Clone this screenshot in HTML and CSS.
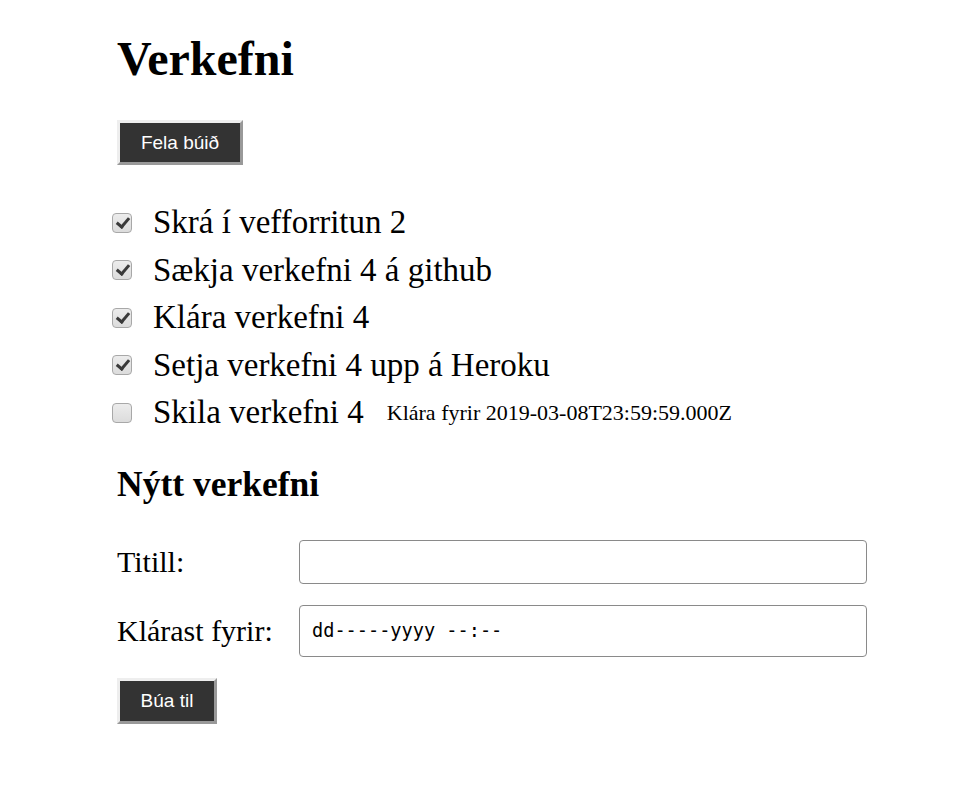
FILE: index.html
```html
<!DOCTYPE html>
<html lang="is">
<head>
<meta charset="utf-8">
<title>Verkefni</title>
<link rel="stylesheet" href="styles.css">
</head>
<body>
<main class="app">
  <h1 class="title">Verkefni</h1>
  <button class="btn btn-hide" type="button">Fela búið</button>
  <ul class="list">
    <li class="item"><input class="check" type="checkbox" checked><span class="item-title">Skrá í vefforritun 2</span></li>
    <li class="item"><input class="check" type="checkbox" checked><span class="item-title">Sækja verkefni 4 á github</span></li>
    <li class="item"><input class="check" type="checkbox" checked><span class="item-title">Klára verkefni 4</span></li>
    <li class="item"><input class="check" type="checkbox" checked><span class="item-title">Setja verkefni 4 upp á Heroku</span></li>
    <li class="item"><input class="check" type="checkbox"><span class="item-title">Skila verkefni 4</span><span class="item-due">Klára fyrir 2019-03-08T23:59:59.000Z</span></li>
  </ul>
  <h2 class="subtitle">Nýtt verkefni</h2>
  <form class="form">
    <div class="field">
      <label class="label" for="title">Titill:</label>
      <input class="input" id="title" type="text">
    </div>
    <div class="field">
      <label class="label" for="due">Klárast fyrir:</label>
      <input class="input input-date" id="due" type="text" value="dd-----yyyy --:--">
    </div>
    <button class="btn btn-create" type="button">Búa til</button>
  </form>
</main>
</body>
</html>
```
FILE: styles.css
```css
html, body {
  margin: 0;
  padding: 0;
  background: #fff;
}
body {
  font-family: "Liberation Serif", "DejaVu Serif", serif;
  color: #000;
}
.app {
  padding: 0 0 0 117px;
  width: 750px;
}
.title {
  font-size: 48px;
  font-weight: bold;
  margin: 0;
  padding-top: 34px;
  line-height: 50px;
}
.btn {
  display: block;
  background: #333;
  color: #fff;
  font-family: "Liberation Sans", Arial, sans-serif;
  font-size: 19px;
  border: 3px solid;
  border-color: #eee #999 #999 #eee;
  padding: 0;
  cursor: pointer;
}
.btn-hide {
  margin-top: 36px;
  width: 126px;
  height: 45px;
}
.list {
  list-style: none;
  margin: 34px 0 0;
  padding: 0;
}
.item {
  display: flex;
  align-items: center;
  height: 47.5px;
  margin-left: -5px;
}
.check {
  appearance: none;
  -webkit-appearance: none;
  width: 20px;
  height: 20px;
  margin: 0 21px 0 0;
  border: 1px solid #a8a8a8;
  border-radius: 4px;
  background: linear-gradient(#ececec, #dcdcdc);
  position: relative;
  flex: none;
}
.check:checked::after {
  content: "";
  position: absolute;
  left: 6px;
  top: 1px;
  width: 5px;
  height: 10px;
  border: solid #3a3a3a;
  border-width: 0 3px 3px 0;
  transform: rotate(40deg);
}
.item-title {
  font-size: 33px;
}
.item-due {
  font-size: 22px;
  margin-left: 23px;
}
.subtitle {
  font-size: 35.5px;
  font-weight: bold;
  margin: 27px 0 0;
  line-height: 40px;
}
.form {
  margin-top: 36px;
}
.field {
  display: flex;
  align-items: center;
  margin-bottom: 21px;
}
.label {
  width: 182px;
  flex: none;
  font-size: 30px;
}
.input {
  box-sizing: border-box;
  width: 568px;
  height: 44px;
  margin: 0;
  border: 1px solid #8a8a8a;
  border-radius: 4px;
  padding: 0 12px;
  font-size: 18px;
  background: #fff;
}
.input-date {
  height: 52px;
  font-family: "DejaVu Sans Mono", monospace;
  font-size: 18.6px;
  color: #000;
}
.btn-create {
  margin-top: 0;
  width: 100px;
  height: 46px;
}
```
